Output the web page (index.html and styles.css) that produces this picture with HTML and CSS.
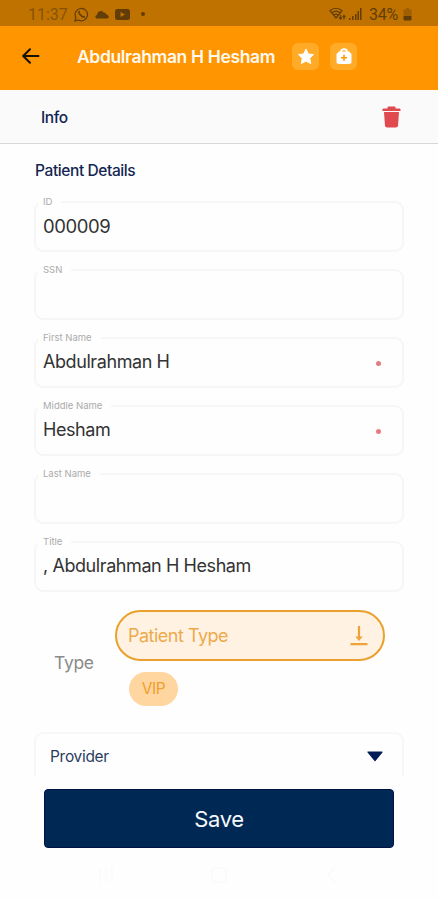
FILE: index.html
```html
<!DOCTYPE html>
<html lang="en">
<head>
<meta charset="utf-8">
<title>Patient Details</title>
<link rel="stylesheet" href="styles.css">
</head>
<body>
<div class="screen">
  <div class="status">
    <span class="clock">11:37</span>
    <svg class="wa" width="15" height="15" viewBox="0 0 15 15" fill="none" stroke="currentColor"><path d="M1 14l.9-3.4A6.2 6.2 0 1 1 4.3 13z" stroke-width="1.2"/><path d="M5 4.6c-.7 1.5 2.800 5.900 5.200 5.300" stroke-width="1.700" stroke-linecap="round"/></svg>
    <svg class="cloud" width="14" height="9" viewBox="0 0 14 9" fill="currentColor"><path d="M2 8.500C-.3 8-.1 5.200 2 4.900 2.300 1 7-.6 8.800 2.800c2-.4 2.800 1 2.800 2C14.500 5.300 14.300 8.500 12 8.500z"/></svg>
    <svg width="15" height="11" viewBox="0 0 15 11" fill="currentColor" fill-rule="evenodd"><path d="M2.500 0h10A2.500 2.500 0 0 1 15 2.500v6a2.500 2.500 0 0 1-2.500 2.500h-10A2.500 2.500 0 0 1 0 8.500v-6A2.500 2.500 0 0 1 2.500 0zM5.500 3v5L10 5.500z"/></svg>
    <i class="dot"></i>
    <svg class="wifi" width="17" height="14" viewBox="0 0 17 14" fill="none" stroke="currentColor" stroke-width="1.200"><path d="M1 3.700C4.500.4 9.500.4 13 3.700L7 11zM3 5.800c2.400-2 5.600-2 8 0M5 8c1.300-1 2.700-1 4 0"/><path d="M11.500 8v4M10 10.500l1.500 1.700 1.500-1.700M15 12.500v-4M13.700 10L15 8.500l1.300 1.500"/></svg>
    <svg class="signal" width="13" height="12" viewBox="0 0 13 12" fill="currentColor"><path d="M0 10h1.500v2H0zM3 8h1.500v4H3zM6 6h1.500v6H6zM8.500 3H10v9H8.500zM11 0h1.500v12H11z"/></svg>
    <span class="percent">34%</span>
    <svg class="battery" width="9" height="13" viewBox="0 0 9 13" fill="currentColor"><path opacity=".35" d="M3 0h3v1.500h2.500V8h-8V1.500H3z"/><path d="M.5 8h8v3.500a1 1 0 0 1-1 1h-6a1 1 0 0 1-1-1z"/></svg>
  </div>
  <header class="header">
    <svg class="back" width="18" height="16" viewBox="0 0 18 16" fill="none" stroke="#171005" stroke-width="2" stroke-linecap="round" stroke-linejoin="round"><path d="M16.500 8H1.500M8 1.200L1.200 8 8 14.800"/></svg>
    <h1>Abdulrahman H Hesham</h1>
    <span class="tile star"><svg width="18" height="17" viewBox="0 0 18 17" fill="#fff" stroke="#fff" stroke-width="1" stroke-linejoin="round"><path d="M9 1l2.300 5 5.200.6-3.800 3.700 1 5.300L9 13l-4.700 2.600 1-5.300L1.500 6.600 6.700 6z"/></svg></span>
    <span class="tile bag"><svg width="16" height="17" viewBox="0 0 16 17"><path d="M5 5V3.500C5 .5 11 .5 11 3.500V5" fill="none" stroke="#fff" stroke-width="1.800"/><path d="M3 3.500h10l2.500 2.500V14a2 2 0 0 1-2 2h-11a2 2 0 0 1-2-2V6z" fill="#fff"/><path d="M8 6.800v6M5 9.800h6" stroke="#ff9800" stroke-width="1.600"/></svg></span>
  </header>
  <div class="infobar">
    <span>Info</span>
    <svg width="19" height="22" viewBox="0 0 19 22" fill="#e0494e"><path d="M5.500 2.500V1.500Q5.500.5 6.500.5h6q1 0 1 1v1h4q1 0 1 1V5H.5V3.500q0-1 1-1z"/><path d="M2 6h15l-1 13.800q-.2 1.700-2 1.700H5q-1.800 0-2-1.700z"/></svg>
  </div>
  <main class="content">
    <h2>Patient Details</h2>
    <div class="field"><label>ID</label><span class="value digits">000009</span></div>
    <div class="field"><label>SSN</label></div>
    <div class="field"><label>First Name</label><span class="value">Abdulrahman H</span><i class="required"></i></div>
    <div class="field"><label>Middle Name</label><span class="value">Hesham</span><i class="required"></i></div>
    <div class="field"><label>Last Name</label></div>
    <div class="field"><label>Title</label><span class="value">, Abdulrahman H Hesham</span></div>
    <div class="type-row">
      <span class="type-label">Type</span>
      <div class="type-body">
        <div class="select"><span>Patient Type</span>
          <svg width="18" height="21" viewBox="0 0 18 21"><path d="M9 1v12M.5 19.200h17" stroke="#eda337" stroke-width="2.200" fill="none"/><path d="M5.300 11.500h7.400L9 16z" fill="#eda337"/></svg>
        </div>
        <span class="chip">VIP</span>
      </div>
    </div>
    <div class="provider"><span>Provider</span>
      <svg width="18" height="11" viewBox="0 0 18 11"><path d="M2 1h14L9 9.500z" fill="#001e55" stroke="#001e55" stroke-width="1.200" stroke-linejoin="round"/></svg>
    </div>
  </main>
  <button class="save">Save</button>
  <div class="navbar">
    <svg width="16" height="16" viewBox="0 0 16 16" stroke="#fbfbfb" stroke-width="2"><path d="M2 1v14M8 1v14M14 1v14"/></svg>
    <svg width="16" height="16" viewBox="0 0 16 16" fill="none" stroke="#fbfbfb" stroke-width="2"><rect x="1" y="1" width="14" height="14" rx="3"/></svg>
    <svg width="16" height="16" viewBox="0 0 16 16" fill="none" stroke="#fbfbfb" stroke-width="2"><path d="M11 1L4 8l7 7"/></svg>
  </div>
</div>
</body>
</html>
```
FILE: styles.css
```css
* { box-sizing: border-box; }
body { margin: 0; background: #fefefe; font-family: Inter, "Liberation Sans", sans-serif; }
svg { display: block; flex: none; }
.screen { width: 438px; height: 900px; display: flex; flex-direction: column; overflow: hidden; }

.status { height: 26px; flex: none; display: flex; align-items: center; padding: 2px 26px 0 28px; background: #bf7200; color: #633d07; font: 16px Roboto, sans-serif; }
.clock { width: 46px; color: #875207; }
.cloud { margin: 0 6px; }
.dot { width: 4px; height: 4px; border-radius: 50%; background: currentColor; margin-left: 11px; }
.wifi { margin-left: auto; }
.signal { margin: 0 7px 0 3px; }
.percent { width: 29px; letter-spacing: -0.2px; }
.battery { margin-left: 5px; }

.header { height: 64px; flex: none; display: flex; align-items: center; padding: 0 0 4px 22px; background: #ff9500; }
.header h1 { width: 199px; margin: 0 16px 0 37px; font-size: 17.5px; font-weight: 600; letter-spacing: -0.36px; color: #fffaf0; white-space: nowrap; }
.tile { width: 27px; height: 27px; border-radius: 6px; background: #ffab27; display: flex; align-items: center; justify-content: center; }
.bag { margin-left: 11px; }

.infobar { height: 54px; flex: none; display: flex; align-items: center; justify-content: space-between; padding: 1px 37px 0 41px; background: #fafafa; border-bottom: 1px solid #d8d8d8; color: #11244f; font-size: 15.5px; font-weight: 500; letter-spacing: -0.4px; }

.content { height: 632px; flex: none; padding: 0 34px; }
.content h2 { height: 57px; margin: 0; padding: 17px 0 0 1px; font-size: 15.5px; line-height: 20px; font-weight: 500; letter-spacing: -0.4px; color: #142651; }
.field { position: relative; height: 51px; margin-bottom: 17.1px; border: 2px solid #f6f6f6; border-radius: 9px; display: flex; align-items: center; justify-content: space-between; padding: 0 21px 2px 7px; }
.field label { position: absolute; left: 2px; top: -8px; padding: 0 9px 0 5px; background: #fefefe; color: #aaa; font-size: 9.5px; line-height: 13px; letter-spacing: 0; }
.value { font-size: 18px; font-weight: 400; letter-spacing: -0.42px; color: #333; white-space: pre; }
.digits { font-size: 18.5px; letter-spacing: -0.4px; }
.required { width: 5px; height: 5px; border-radius: 50%; background: #e77b83; margin-top: 3px; }

.type-row { display: flex; align-items: center; height: 96px; padding-left: 20px; }
.type-label { width: 61px; padding-top: 10px; font-size: 17.5px; letter-spacing: -0.3px; color: #8a8a8a; }
.select { width: 270px; height: 51px; border: 2px solid #eaa02d; border-radius: 26px; background: #fff2e3; display: flex; align-items: center; justify-content: space-between; padding: 0 15px 0 11px; color: #edaa4a; font-size: 18px; letter-spacing: -0.5px; }
.chip { display: flex; align-items: center; justify-content: center; width: 49px; height: 34px; margin: 11px 0 0 14px; border-radius: 17px; background: #ffd5a0; color: #efa02c; font-size: 15.5px; letter-spacing: -0.5px; }
.provider { height: 44px; margin-top: 26px; border: 2px solid #f7f7f7; border-bottom: 0; border-radius: 9px 9px 0 0; display: flex; align-items: center; justify-content: space-between; padding: 4px 18px 0 14px; font-size: 15.5px; letter-spacing: -0.3px; color: #2b3d5c; }

.save { flex: none; width: 350px; height: 59px; margin: 13px 0 0 44px; padding: 0; border: 1px solid #001346; border-radius: 4px; background: #002855; color: #f7f9fc; font: 22px Inter, sans-serif; letter-spacing: -0.3px; }
.navbar { display: flex; justify-content: space-between; padding: 19px 98px 0; }
```
